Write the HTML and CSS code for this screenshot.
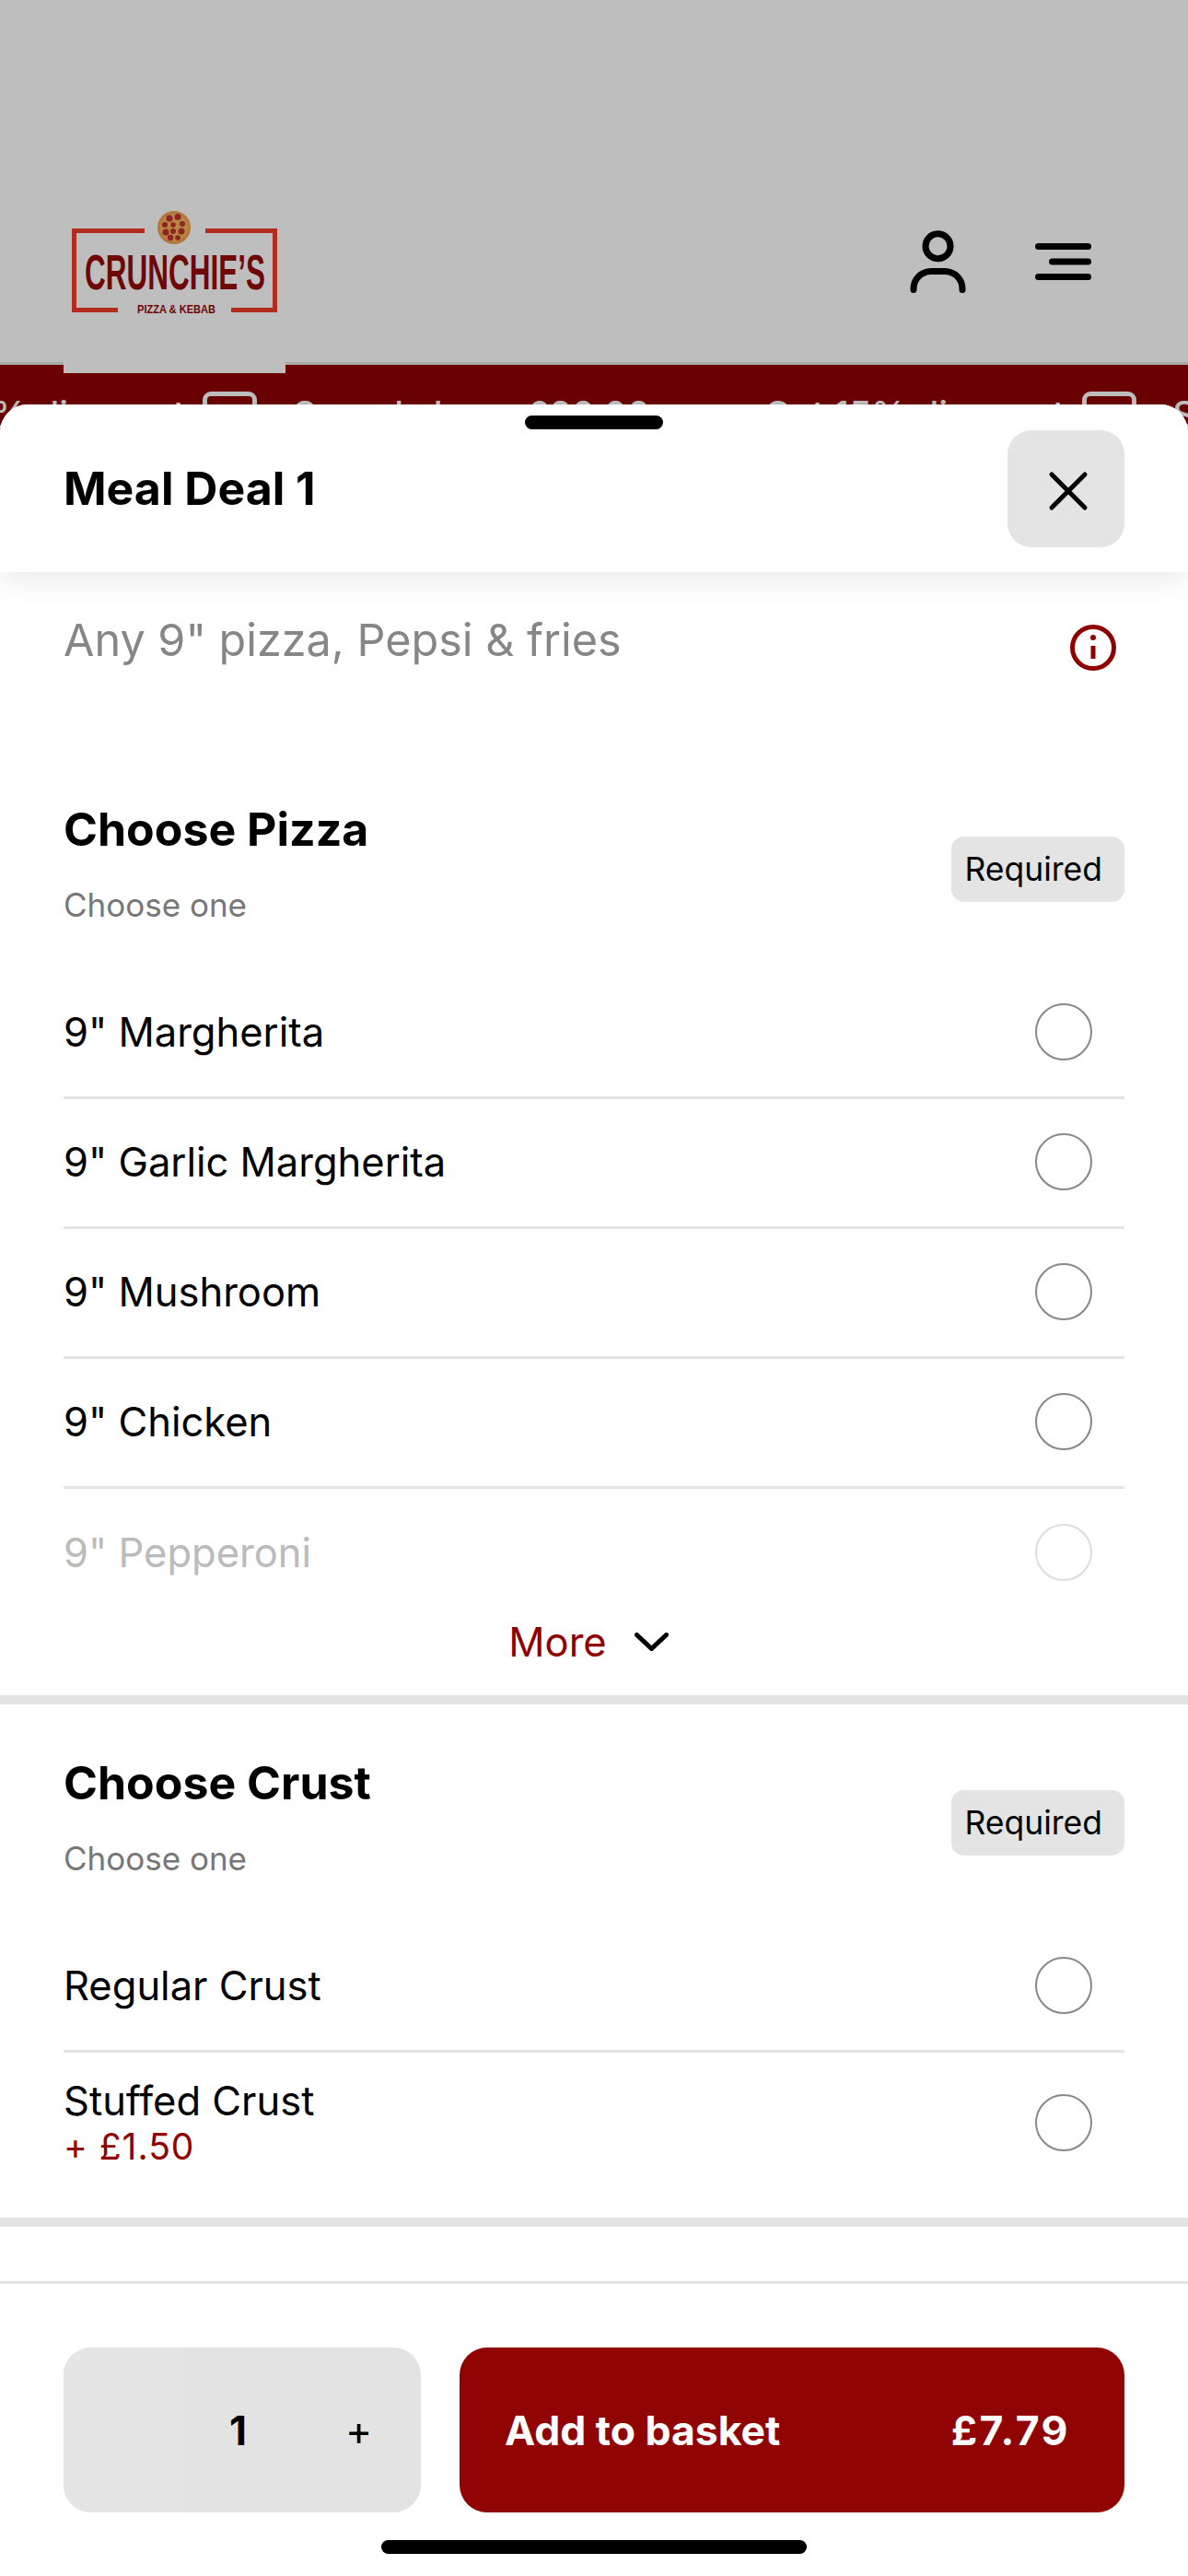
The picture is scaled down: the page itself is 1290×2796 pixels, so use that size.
FILE: index.html
```html
<!DOCTYPE html>
<html lang="en">
  <head>
    <meta charset="UTF-8" />
    <meta name="viewport" content="width=device-width, initial-scale=1.0" />
    <title>Crunchie's Pizza &amp; Kebab</title>
    <link rel="stylesheet" href="styles.css">
  </head>
  <body>
    <header class="topbar">
      <a href="#" class="logo">
        <svg width="241" height="130" viewBox="0 0 241 130">
          <path class="logo-frame" d="M88 30.500H11.500V116.500H59M182 116.500H229.500V30.500H154" />
          <circle cx="120" cy="27" r="18" fill="#f0a050" />
          <circle cx="120" cy="27" r="15" fill="#f5b45f" />
          <g fill="#c0302a">
            <circle cx="115" cy="17" r="3.500" />
            <circle cx="124" cy="15.500" r="3.500" />
            <circle cx="110" cy="24" r="3" />
            <circle cx="119" cy="24" r="2.800" />
            <circle cx="129" cy="23" r="3" />
            <circle cx="111" cy="32" r="3.500" />
            <circle cx="119" cy="31" r="3" />
            <circle cx="128" cy="31" r="3.500" />
            <circle cx="116" cy="38" r="3.200" />
            <circle cx="124" cy="38" r="2.800" />
          </g>
          <text class="logo-name" x="23" y="94" textLength="196" lengthAdjust="spacingAndGlyphs">CRUNCHIE’S</text>
          <text class="logo-sub" x="80" y="120" textLength="85" lengthAdjust="spacingAndGlyphs">PIZZA &amp; KEBAB</text>
        </svg>
      </a>
      <div class="topbar-icons">
        <svg width="67" height="73" viewBox="0 0 67 73" class="icon-line">
          <circle cx="33.500" cy="19.300" r="13.500" />
          <path d="M7 66.500v-1a19 19 0 0 1 19-19h15a19 19 0 0 1 19 19v1" />
        </svg>
        <svg width="61" height="41" viewBox="0 0 61 41" class="icon-line">
          <path d="M3.500 3.500H57.500M18.500 20H57.500M3.500 36.500H57.500" />
        </svg>
      </div>
    </header>

    <div class="promo-band">
      <div class="promo-track">
        <div class="promo">
          <span class="promo-text">Get 15% discount</span>
          <span class="promo-icon"></span>
          <span class="promo-text promo-next">Spend above £20.00</span>
        </div>
        <div class="promo">
          <span class="promo-text">Get 15% discount</span>
          <span class="promo-icon"></span>
          <span class="promo-text promo-next">Spend above £20.00</span>
        </div>
      </div>
    </div>

    <div class="scrim"></div>

    <div class="sheet">
      <div class="sheet-handle"></div>
      <div class="sheet-header">
        <h1 class="sheet-title">Meal Deal 1</h1>
        <button class="close-btn">
          <svg width="44" height="44" viewBox="0 0 44 44" class="icon-line icon-thin">
            <path d="M4 4L40 40M40 4L4 40" />
          </svg>
        </button>
      </div>

      <div class="sheet-body">
        <div class="description">
          <p>Any 9" pizza, Pepsi &amp; fries</p>
          <svg width="50" height="50" viewBox="0 0 50 50" class="info-icon">
            <circle cx="25" cy="25" r="22.500" />
            <path d="M25 23V37" />
            <circle class="info-dot" cx="25" cy="14" r="3" />
          </svg>
        </div>

        <section class="group">
          <div class="group-head">
            <div>
              <h2 class="group-title">Choose Pizza</h2>
              <div class="group-sub">Choose one</div>
            </div>
            <span class="badge">Required</span>
          </div>
          <div class="options">
            <div class="option"><span>9" Margherita</span><span class="radio"></span></div>
            <div class="option"><span>9" Garlic Margherita</span><span class="radio"></span></div>
            <div class="option"><span>9" Mushroom</span><span class="radio"></span></div>
            <div class="option"><span>9" Chicken</span><span class="radio"></span></div>
            <div class="option option-faded"><span>9" Pepperoni</span><span class="radio"></span></div>
          </div>
          <div class="more">
            <span>More</span>
            <svg width="37" height="20" viewBox="0 0 37 20" class="icon-line icon-thin">
              <path d="M2.500 2.500L18.500 17.500L34.500 2.500" />
            </svg>
          </div>
        </section>

        <section class="group group-last">
          <div class="group-head">
            <div>
              <h2 class="group-title">Choose Crust</h2>
              <div class="group-sub">Choose one</div>
            </div>
            <span class="badge">Required</span>
          </div>
          <div class="options">
            <div class="option"><span>Regular Crust</span><span class="radio"></span></div>
            <div class="option option-price">
              <div>
                <div>Stuffed Crust</div>
                <div class="price">+ £1.50</div>
              </div>
              <span class="radio"></span>
            </div>
          </div>
        </section>
      </div>

      <div class="sheet-footer">
        <div class="qty">
          <span class="qty-minus"></span>
          <span class="qty-value">1</span>
          <span class="qty-plus">+</span>
        </div>
        <button class="add-btn">
          <span>Add to basket</span>
          <span class="add-price">£7.79</span>
        </button>
      </div>
    </div>

    <div class="home-bar"></div>
  </body>
</html>
```

FILE: styles.css
```css
* {
  box-sizing: border-box;
}

body {
  font-family: Inter, "Liberation Sans", sans-serif;
  margin: 0;
  padding: 0;
  width: 1290px;
  height: 2796px;
  position: relative;
  overflow: hidden;
  background-color: #fff;
  color: #000;
}

h1,
h2,
p {
  margin: 0;
}

button {
  font-family: inherit;
  border: none;
  cursor: pointer;
}

/* Page behind the sheet */
.topbar {
  height: 396px;
  padding: 0 105px 0 69px;
  display: flex;
  justify-content: space-between;
  align-items: flex-end;
  background-color: #fff;
  border-bottom: 3px solid #e4e4e4;
}

.logo {
  position: relative;
  z-index: 1;
  display: block;
  width: 241px;
  height: 185px;
  margin-bottom: -12px;
  background-color: #fff;
}

.logo svg {
  display: block;
}

.logo-frame {
  fill: none;
  stroke: #ef3b2b;
  stroke-width: 5;
}

.logo-name {
  font-family: "Liberation Sans", sans-serif;
  font-size: 54px;
  font-weight: 700;
  fill: #950a0a;
}

.logo-sub {
  font-family: "Liberation Sans", sans-serif;
  font-size: 13px;
  font-weight: 700;
  fill: #950a0a;
}

.topbar-icons {
  display: flex;
  align-items: center;
  gap: 72px;
  margin-bottom: 72px;
}

.icon-line {
  display: block;
  fill: none;
  stroke: #000;
  stroke-width: 7;
  stroke-linecap: round;
}

.icon-thin {
  stroke-width: 5;
}

.promo-band {
  height: 120px;
  overflow: hidden;
  background-color: #8f0000;
  padding-top: 29px;
}

.promo-track {
  display: flex;
  margin-left: -125px;
}

.promo {
  flex: none;
  width: 955px;
  display: flex;
  align-items: flex-start;
  gap: 19px;
  color: #fff;
}

.promo-text {
  font-size: 39px;
  line-height: 50px;
  font-weight: 500;
  white-space: nowrap;
}

.promo-next {
  margin-left: 20px;
}

.promo-icon {
  flex: none;
  width: 59px;
  height: 59px;
  border: 5px solid #fff;
  border-radius: 9px;
}

.scrim {
  position: absolute;
  inset: 0;
  z-index: 2;
  background-color: rgba(0, 0, 0, 0.255);
}

/* Bottom sheet */
.sheet {
  position: absolute;
  z-index: 3;
  left: 0;
  right: 0;
  top: 439px;
  bottom: 0;
  display: flex;
  flex-direction: column;
  background-color: #fff;
  border-radius: 30px 30px 0 0;
}

.sheet-handle {
  position: absolute;
  z-index: 1;
  top: 12px;
  left: 570px;
  width: 150px;
  height: 15px;
  border-radius: 8px;
  background-color: #000;
}

.sheet-header {
  flex: none;
  height: 182px;
  padding: 28px 69px 0 69px;
  display: flex;
  justify-content: space-between;
  align-items: flex-start;
  background-color: #fff;
  border-radius: 30px 30px 0 0;
  box-shadow: 0 10px 30px rgba(0, 0, 0, 0.08);
  position: relative;
}

.sheet-title {
  font-size: 50px;
  line-height: 127px;
  font-weight: 700;
}

.close-btn {
  width: 127px;
  height: 127px;
  padding: 4px 0 0 5px;
  display: flex;
  align-items: center;
  justify-content: center;
  border-radius: 26px;
  background-color: #e4e4e4;
}

.sheet-body {
  flex: 1;
  min-height: 0;
  overflow: hidden;
}

.description {
  height: 194px;
  padding: 36px 78px 0 69px;
  display: flex;
  justify-content: space-between;
  align-items: flex-start;
  font-size: 48.5px;
  line-height: 76px;
  color: #868686;
}

.info-icon {
  margin-top: 21px;
  fill: none;
  stroke: #8f0000;
  stroke-width: 5;
}

.info-dot {
  fill: #8f0000;
  stroke: none;
}

.group {
  border-bottom: 10px solid #e4e4e4;
}

.group-last {
  padding-bottom: 27px;
}

.group-head {
  height: 237px;
  padding: 0 69px;
  display: flex;
  justify-content: space-between;
  align-items: flex-start;
}

.group-title {
  margin-top: 55px;
  font-size: 50px;
  line-height: 60px;
  font-weight: 700;
}

.group-sub {
  margin-top: 31px;
  font-size: 35px;
  line-height: 42px;
  color: #777;
}

.badge {
  margin-top: 93px;
  height: 71px;
  padding: 0 24px 0 14px;
  display: flex;
  align-items: center;
  border-radius: 14px;
  background-color: #e4e4e4;
  font-size: 35.5px;
}

.options {
  position: relative;
  padding: 0 69px;
}

.option {
  height: 141px;
  padding-bottom: 2px;
  display: flex;
  justify-content: space-between;
  align-items: center;
  font-size: 43.5px;
  border-bottom: 3px solid #e4e4e4;
}

.option:last-child {
  border-bottom: none;
}

.option-price {
  height: 152px;
  padding-bottom: 0;
  line-height: 52px;
}

.price {
  font-size: 39px;
  line-height: 48px;
  letter-spacing: 1px;
  color: #8f0000;
}

.radio {
  flex: none;
  width: 62px;
  height: 62px;
  margin-right: 35px;
  border: 2px solid #888;
  border-radius: 50%;
}

.option-faded {
  height: 138px;
  padding-bottom: 0;
  color: #bbb;
}

.option-faded .radio {
  border-color: #ddd;
}

.more {
  height: 86px;
  padding: 0 12px 30px 0;
  display: flex;
  justify-content: center;
  align-items: center;
  gap: 30px;
  font-size: 43.5px;
  color: #8f0000;
}

.sheet-footer {
  flex: none;
  height: 320px;
  padding: 69px 69px 0;
  display: flex;
  gap: 42px;
  align-items: flex-start;
  background-color: #fff;
  border-top: 3px solid #e4e4e4;
}

.qty {
  flex: none;
  width: 388px;
  height: 179px;
  display: flex;
  align-items: center;
  border-radius: 30px;
  background-color: #e3e3e3;
}

.qty-minus {
  align-self: stretch;
  width: 132px;
  border-radius: 30px 0 0 30px;
  background-color: #e5e5e5;
}

.qty-value {
  width: 115px;
  text-align: center;
  font-size: 44px;
  font-weight: 700;
}

.qty-plus {
  width: 141px;
  padding-left: 6px;
  text-align: center;
  font-size: 44px;
}

.add-btn {
  flex: 1;
  height: 179px;
  padding: 0 59px 0 49px;
  display: flex;
  justify-content: space-between;
  align-items: center;
  border-radius: 30px;
  background-color: #900404;
  color: #fff;
  font-size: 44.5px;
  font-weight: 700;
}

.add-price {
  letter-spacing: 2.5px;
}

.home-bar {
  position: absolute;
  z-index: 4;
  left: 414px;
  top: 2757px;
  width: 462px;
  height: 15px;
  border-radius: 8px;
  background-color: #000;
}
```
